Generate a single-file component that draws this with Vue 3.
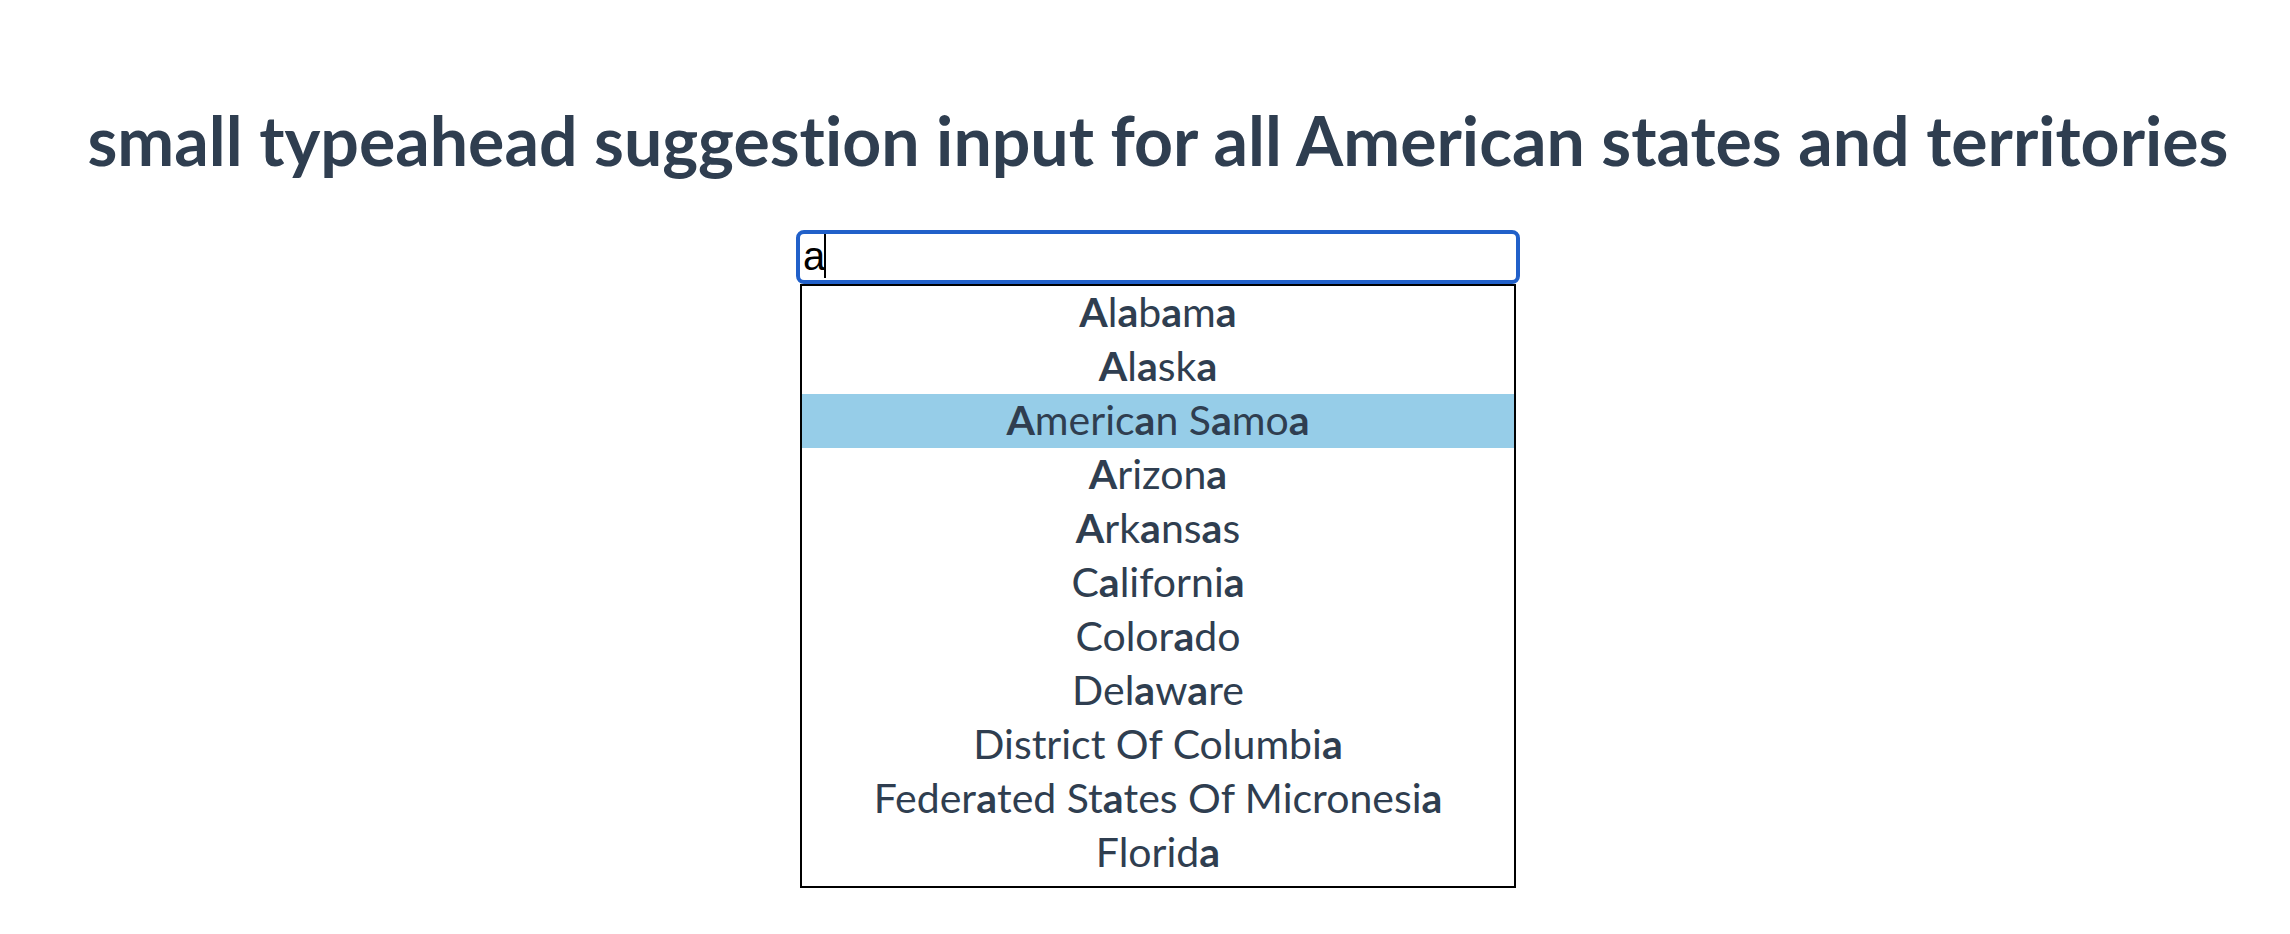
<script setup>
import { computed, ref } from 'vue'

const query = ref('a')
const active = ref(2)

const states = [
  'Alabama',
  'Alaska',
  'American Samoa',
  'Arizona',
  'Arkansas',
  'California',
  'Colorado',
  'Delaware',
  'District Of Columbia',
  'Federated States Of Micronesia',
  'Florida',
]

// Splits a name into matching and non-matching pieces
const split = (name, term) => {
  if (!term) return [{ text: name, hit: false }]
  const escaped = term.replace(/[.*+?^${}()|[\]\\]/g, '\\$&')
  return name
    .split(new RegExp(`(${escaped})`, 'gi'))
    .filter(Boolean)
    .map((text) => ({ text, hit: text.toLowerCase() === term.toLowerCase() }))
}

const suggestions = computed(() =>
  states
    .filter((name) => name.toLowerCase().includes(query.value.toLowerCase()))
    .map((name) => ({ name, parts: split(name, query.value) })),
)
</script>

<template>
  <main class="page">
    <h1 id="title" class="title">small typeahead suggestion input for all American states and territories</h1>
    <div class="typeahead">
      <div class="field">
        <input
          v-model="query"
          class="input"
          type="text"
          role="combobox"
          aria-labelledby="title"
          aria-controls="suggestions"
          aria-expanded="true"
          autocomplete="off"
        />
        <span v-if="query === 'a'" class="caret"></span>
      </div>
      <ul id="suggestions" class="list" role="listbox" aria-labelledby="title">
        <li
          v-for="(item, i) in suggestions"
          :key="item.name"
          class="item"
          :class="{ active: i === active }"
          role="option"
          :aria-selected="i === active"
          @mouseenter="active = i"
          @click="query = item.name"
        ><template v-for="(part, p) in item.parts" :key="p"><b v-if="part.hit">{{ part.text }}</b><template v-else>{{ part.text }}</template></template></li>
      </ul>
    </div>
  </main>
</template>

<style>
body {
  background: #ffffff;
}
</style>

<style scoped>
.page {
  padding: 96px 0 40px 26px;
  color: #2f3e50;
  font-family: Avenir, Lato, Helvetica, Arial, sans-serif;
  font-variant-ligatures: none;
  text-align: center;
}

.title {
  margin: 0 0 46px;
  font-size: 68px;
  line-height: 88px;
  font-weight: 700;
  white-space: nowrap;
}

.typeahead {
  width: 724px;
  max-width: 100%;
  margin: 0 auto;
}

.field {
  position: relative;
}

.input {
  display: block;
  box-sizing: border-box;
  width: 100%;
  height: 54px;
  margin: 0;
  padding: 0 3px 2px;
  border: 4px solid #2160c9;
  border-radius: 8px;
  outline: none;
  background: #ffffff;
  color: #000000;
  caret-color: transparent;
  font-family: "Liberation Sans", Arial, sans-serif;
  font-size: 40px;
}

.caret {
  position: absolute;
  top: 4px;
  left: 28px;
  width: 2px;
  height: 44px;
  background: #000000;
}

.list {
  margin: 0 4px;
  padding: 0 0 6px;
  border: 2px solid #000000;
  list-style: none;
}

.item {
  padding-bottom: 2px;
  font-size: 41px;
  line-height: 52px;
  font-weight: 400;
  cursor: pointer;
}

.item b {
  font-weight: 700;
}

.active {
  background: #96cde8;
}
</style>
